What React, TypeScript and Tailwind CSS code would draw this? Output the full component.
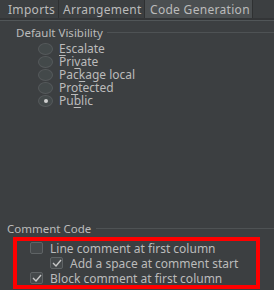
import React from "react";

const font = { fontFamily: '"Noto Sans", "Liberation Sans", sans-serif' };

const Radio = ({ checked }: { checked?: boolean }) => (
  <span className="flex h-[12px] w-[15px] items-center justify-center rounded-[50%] border border-[#55595b] bg-[#43494a]">
    {checked && <span className="h-[4px] w-[4px] rounded-full bg-[#d0d0d0]" />}
  </span>
);

const Check = ({ checked }: { checked?: boolean }) => (
  <span className="flex h-[12px] w-[13px] items-center justify-center rounded-[2px] border border-[#5f6365] bg-[#45494b]">
    {checked && (
      <svg width="10" height="8" viewBox="0 0 10 8">
        <path d="M1 4 L4 7 L9 1" stroke="#c8c8c8" strokeWidth="1.4" fill="none" />
      </svg>
    )}
  </span>
);

const U = ({ children }: { children: React.ReactNode }) => (
  <span className="underline underline-offset-2">{children}</span>
);

const radios: [React.ReactNode, boolean][] = [
  [<><U>E</U>scalate</>, false],
  [<>Pri<U>v</U>ate</>, false],
  [<>Pac<U>k</U>age local</>, false],
  [<>Pr<U>o</U>tected</>, false],
  [<>Pu<U>b</U>lic</>, true],
];

export default function App() {
  return (
    <div
      className="flex h-[290px] w-[274px] flex-col overflow-hidden bg-[#3c3f41] text-[12px] leading-[13px] text-[#bbbbbb]"
      style={font}
    >
      <div className="flex h-[18px] bg-[#3c3f41] tracking-[0.3px]">
        <div className="flex w-[59px] items-center border-r border-[#2f3132] pl-[8px]">Imports</div>
        <div className="flex w-[86px] items-center border-r border-[#2f3132] pl-[4px]">Arrangement</div>
        <div className="flex w-[108px] items-center border-r border-[#2f3132] bg-[#4b4f51] pl-[5px]">
          Code Generation
        </div>
      </div>
      <div className="h-[3px] border-b border-[#515658] bg-[#333537]" />

      <div className="mt-[5px] flex items-center pl-[16px]">
        <span className="text-[11.5px]">Default Visibility</span>
        <span className="ml-[4px] h-px flex-1 bg-[#4e5254]" />
      </div>
      <div className="mt-[3px] flex flex-col pl-[38px]">
        {radios.map(([label, checked], i) => (
          <div key={i} className="flex h-[13px] items-center gap-[6px]">
            <Radio checked={checked} />
            <span>{label}</span>
          </div>
        ))}
      </div>

      <div className="flex-1" />

      <div className="flex items-center pl-[7px]">
        <span className="text-[11.5px]">Comment Code</span>
        <span className="ml-[5px] h-px flex-1 bg-[#4e5254]" />
      </div>
      <div className="mb-[1px] ml-[13px] mr-[14px] mt-[2px] flex h-[52px] flex-col border-4 border-[#ff0000] pl-[13px]">
        <div className="flex h-[14px] items-center gap-[7px]">
          <Check />
          <span>Line comment at first column</span>
        </div>
        <div className="flex h-[16px] items-center gap-[7px] pl-[20px]">
          <Check checked />
          <span>Add a space at comment start</span>
        </div>
        <div className="flex h-[14px] items-center gap-[7px]">
          <Check checked />
          <span>Block comment at first column</span>
        </div>
      </div>
    </div>
  );
}
